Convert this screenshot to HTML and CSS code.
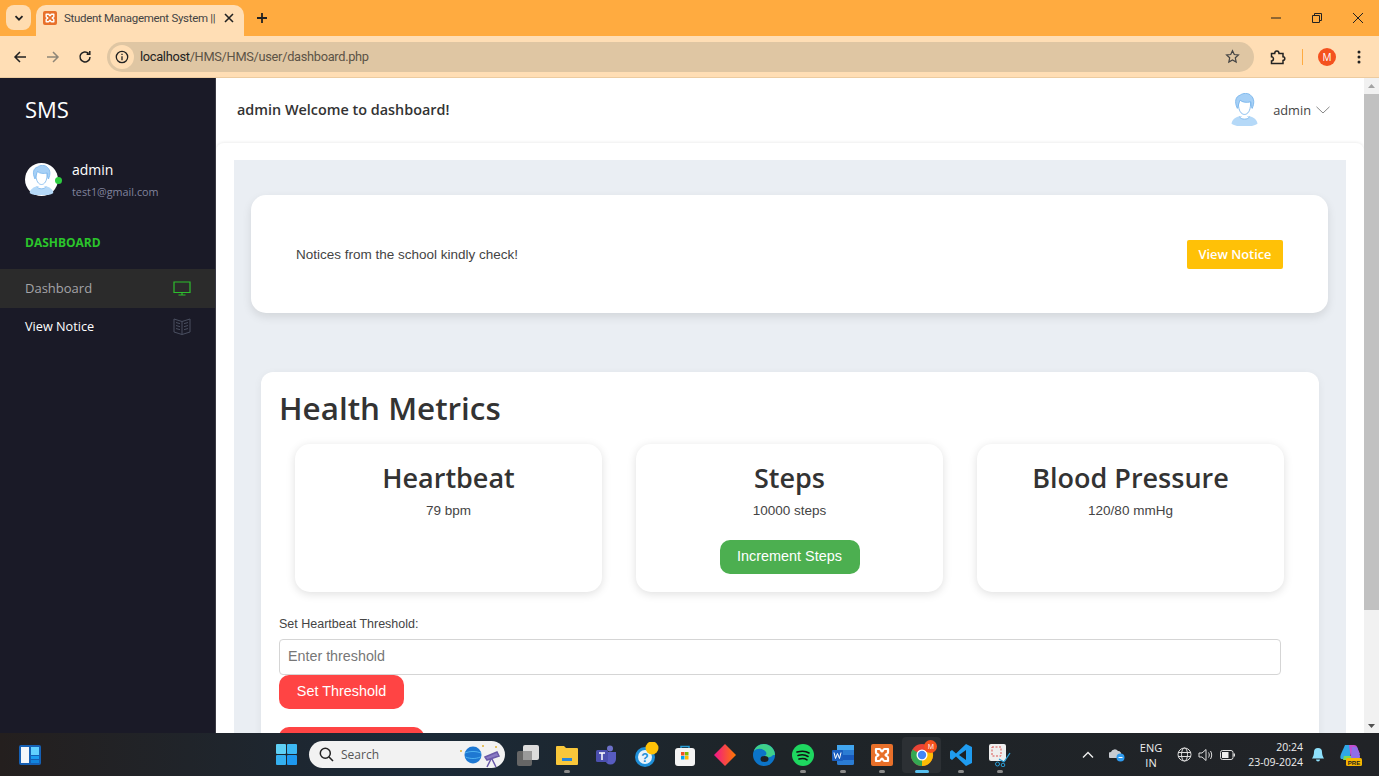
FILE: index.html
```html
<!DOCTYPE html>
<html lang="en">
<head>
<meta charset="utf-8">
<title>Student Management System</title>
<link rel="stylesheet" href="styles.css">
</head>
<body>
<div class="browser">
  <div class="tabstrip">
    <div class="tabsearch"><svg width="10" height="10" viewBox="0 0 10 10"><path d="M1.500 3.200 5 6.700l3.500-3.500" fill="none" stroke="#222" stroke-width="1.800"/></svg></div>
    <div class="tab">
      <svg class="favicon" width="14" height="14" viewBox="0 0 22 22"><rect width="22" height="22" rx="3" fill="#e8702a"/><path class="xampp" d="M5 5h3.500c1.500 0 1.500 2.500 2.500 2.500S12 5 13.500 5H17v3.500c0 1.500-2.500 1.500-2.500 2.500s2.500 1 2.500 2.500V17h-3.500c-1.500 0-1.500-2.500-2.500-2.500S9.500 17 8.500 17H5v-3.500c0-1.500 2.500-1.500 2.500-2.500S5 10 5 8.500z"/></svg>
      <span class="tabtitle">Student Management System ||</span>
      <svg width="10" height="10" viewBox="0 0 10 10"><path d="M1 1l8 8M9 1l-8 8" stroke="#222" stroke-width="1.600"/></svg>
    </div>
    <svg class="newtab" width="12" height="12" viewBox="0 0 12 12"><path d="M6 1v10M1 6h10" stroke="#222" stroke-width="1.800"/></svg>
    <div class="wincontrols">
      <svg width="12" height="12" viewBox="0 0 12 12"><path d="M1 6h10" stroke="#222"/></svg>
      <svg width="12" height="12" viewBox="0 0 12 12"><path d="M1.500 3.500h7v7h-7zM3.500 3.500v-2h7v7h-2" fill="none" stroke="#222"/></svg>
      <svg width="12" height="12" viewBox="0 0 12 12"><path d="M1 1l10 10M11 1L1 11" stroke="#222"/></svg>
    </div>
  </div>
  <div class="toolbar">
    <svg class="navicon" width="14" height="14" viewBox="0 0 14 14"><path d="M13 7H2M7 2 2 7l5 5" fill="none" stroke="#222" stroke-width="1.500"/></svg>
    <svg class="navicon" width="14" height="14" viewBox="0 0 14 14"><path d="M1 7h11M7 2l5 5-5 5" fill="none" stroke="#8f8677" stroke-width="1.500"/></svg>
    <svg class="navicon" width="14" height="14" viewBox="0 0 14 14"><path d="M12 7a5 5 0 1 1-1.500-3.600M11.800 1v3.200H8.600" fill="none" stroke="#222" stroke-width="1.500"/></svg>
    <div class="omnibox">
      <span class="infobadge"><svg width="14" height="14" viewBox="0 0 14 14"><circle cx="7" cy="7" r="5.700" fill="none" stroke="#222" stroke-width="1.300"/><path d="M7 6.200v4M7 3.800v1.300" stroke="#222" stroke-width="1.300"/></svg></span>
      <span class="url"><span class="urlhost">localhost</span>/HMS/HMS/user/dashboard.php</span>
      <svg class="star" width="15" height="15" viewBox="0 0 16 16"><path d="M8 1.800l1.900 4.100 4.400.5-3.300 3 .9 4.400L8 11.600l-3.900 2.200.9-4.400-3.300-3 4.400-.5z" fill="none" stroke="#444" stroke-width="1.300"/></svg>
    </div>
    <svg class="ext" width="16" height="16" viewBox="0 0 16 16"><path d="M1.500 4.500h3.200c0-3.500 4.300-3.500 4.300 0h4v3.200c2.400 0 2.400 3.800 0 3.800v3H1.500v-2.600c2.600 0 2.600-4.200 0-4.200z" fill="none" stroke="#222" stroke-width="1.500"/></svg>
    <span class="toolsep"></span>
    <span class="profile">M</span>
    <svg class="menu" width="4" height="14" viewBox="0 0 4 14"><circle cx="2" cy="2" r="1.500" fill="#222"/><circle cx="2" cy="7" r="1.500" fill="#222"/><circle cx="2" cy="12" r="1.500" fill="#222"/></svg>
  </div>

  <div class="viewport">
    <aside class="sidebar">
      <div class="brand">SMS</div>
      <div class="user">
        <span class="useravatar">
          <svg width="33" height="33" viewBox="0 0 33 33"><circle cx="16.500" cy="16.500" r="16.500" fill="#fff"/><use href="#person" x="4.500" y="2" width="24" height="30"/></svg>
          <span class="online"></span>
        </span>
        <div class="userinfo">
          <div class="username">admin</div>
          <div class="useremail">test1@gmail.com</div>
        </div>
      </div>
      <div class="navlabel">DASHBOARD</div>
      <nav class="nav">
        <a class="navitem active">Dashboard
          <svg width="18" height="15" viewBox="0 0 18 15"><path d="M1 1h16v10.500H1zM9 11.500v2.300M5.500 14h7" fill="none" stroke="#2dbe2d" stroke-width="1.200"/></svg>
        </a>
        <a class="navitem">View Notice
          <svg width="18" height="17" viewBox="0 0 18 17"><path d="M9 3.500 1 1v13l8 2.500 8-2.500V1zM9 3.500v13M3 4.500l4 1.200M3 7.500l4 1.200M3 10.500l4 1.200M15 4.500l-4 1.200M15 7.500l-4 1.200M15 10.500l-4 1.200" fill="none" stroke="#4a4f60" stroke-width="1"/></svg>
        </a>
      </nav>
    </aside>

    <main class="main">
      <header class="topbar">
        <div class="welcome">admin Welcome to dashboard!</div>
        <div class="topuser">
          <svg width="27" height="33" viewBox="0 0 24 30"><use href="#person"/></svg>
          <span class="topname">admin</span>
          <svg width="14" height="8" viewBox="0 0 14 8"><path d="M.5.800 7 7 13.500.800" fill="none" stroke="#888" stroke-width="1"/></svg>
        </div>
      </header>
      <div class="pagewrap">
        <div class="page">
          <section class="notice">
            <p class="noticetext">Notices from the school kindly check!</p>
            <a class="noticebtn">View Notice</a>
          </section>
          <section class="health">
            <h1 class="healthtitle">Health Metrics</h1>
            <div class="metrics">
              <div class="metric"><h2>Heartbeat</h2><p>79 bpm</p></div>
              <div class="metric"><h2>Steps</h2><p>10000 steps</p><button class="btn btngreen">Increment Steps</button></div>
              <div class="metric"><h2>Blood Pressure</h2><p>120/80 mmHg</p></div>
            </div>
            <label class="fieldlabel" for="hb">Set Heartbeat Threshold:</label>
            <input id="hb" class="field" type="text" placeholder="Enter threshold">
            <button class="btn btnred">Set Threshold</button>
            <button class="btn btnred btnnext" aria-hidden="true"></button>
          </section>
        </div>
      </div>
    </main>

    <div class="scrollbar">
      <svg width="9" height="6" viewBox="0 0 9 6"><path d="M4.500 1 8 5H1z" fill="#a3a3a3"/></svg>
      <div class="thumb"></div>
      <svg width="9" height="6" viewBox="0 0 9 6"><path d="M4.500 5 8 1H1z" fill="#505050"/></svg>
    </div>
  </div>

  <footer class="taskbar">
    <svg class="widgets" width="22" height="20" viewBox="0 0 22 20"><rect width="22" height="20" rx="2" fill="#1560b5"/><rect x="2" y="2" width="8" height="16" fill="#f2f6fa"/><rect x="12" y="2" width="8" height="8" fill="#62d0ff"/><rect x="12" y="11" width="8" height="3" fill="#1a9bf0"/><rect x="12" y="15" width="8" height="3" fill="#1285de"/></svg>
    <div class="centerbar">
      <svg class="tbicon" width="21" height="21" viewBox="0 0 21 21"><rect width="10" height="10" rx="1" fill="#5fd0f5"/><rect x="11" width="10" height="10" rx="1" fill="#3cb8f3"/><rect y="11" width="10" height="10" rx="1" fill="#35b0f0"/><rect x="11" y="11" width="10" height="10" rx="1" fill="#1e98ee"/></svg>
      <div class="search">
        <svg width="15" height="15" viewBox="0 0 15 15"><circle cx="6.300" cy="6.300" r="5" fill="none" stroke="#222" stroke-width="1.500"/><path d="M10 10l4 4" stroke="#222" stroke-width="1.600"/></svg>
        <span class="searchtext">Search</span>
        <svg class="searchart" width="46" height="26" viewBox="0 0 46 26"><circle cx="15" cy="13" r="8.500" fill="#1e78d2"/><path d="M7 11c5-2 11-2 16 0M7.500 15c5 2 10 2 15 0" stroke="#4fb2f0" fill="none"/><path d="M27 15l12-5 2 4-12 4zM33 17l-4 8M34 17l4 8" stroke="#6a5aa8" stroke-width="1.500" fill="#8a7ac4"/><circle cx="3" cy="9" r="1" fill="#e0b030"/><circle cx="25" cy="4" r="1" fill="#e0b030"/><circle cx="38" cy="5" r="1" fill="#e0b030"/></svg>
      </div>
      <div class="apps">
        <span class="app"><svg width="24" height="22" viewBox="0 0 24 22"><rect x="1" y="7" width="15" height="15" rx="2" fill="#666"/><rect x="7" y="1" width="16" height="15" rx="2" fill="#dcdcdc"/><rect x="7" y="7" width="9" height="9" fill="#9a9a9a"/></svg></span>
        <span class="app run"><svg width="22" height="20" viewBox="0 0 22 20"><path d="M0 2a1 1 0 0 1 1-1h7l2 2h11a1 1 0 0 1 1 1v15a1 1 0 0 1-1 1H1a1 1 0 0 1-1-1z" fill="#f9c73a"/><rect x="6" y="13" width="10" height="3" fill="#2a86d8"/></svg></span>
        <span class="app"><svg width="22" height="20" viewBox="0 0 22 20"><circle cx="15" cy="3.500" r="3" fill="#6c70c8"/><path d="M10 7h11v7a5 5 0 0 1-11 0z" fill="#585cc0"/><rect x="1" y="5" width="12" height="12" rx="1.500" fill="#4b4fae"/><path d="M4 8h6M7 8v7" stroke="#fff" stroke-width="1.500"/></svg></span>
        <span class="app"><svg width="26" height="26" viewBox="0 0 26 26"><circle cx="12" cy="15" r="10" fill="#1f8fd8"/><circle cx="12" cy="15" r="7" fill="#e8f3fb"/><text x="12" y="19.500" class="helpq">?</text><circle cx="19" cy="6" r="6.500" fill="#ffc107"/></svg></span>
        <span class="app"><svg width="22" height="22" viewBox="0 0 22 22"><path d="M7 5V2.500h8V5" fill="none" stroke="#2a9fd8" stroke-width="1.500"/><rect x="1" y="4" width="20" height="18" rx="3" fill="#f4f4f4"/><rect x="7" y="8" width="3.500" height="3.500" fill="#f25022"/><rect x="11" y="8" width="3.500" height="3.500" fill="#7fba00"/><rect x="7" y="12" width="3.500" height="3.500" fill="#00a4ef"/><rect x="11" y="12" width="3.500" height="3.500" fill="#ffb900"/></svg></span>
        <span class="app"><svg width="22" height="22" viewBox="0 0 22 22"><defs><linearGradient id="dia" x1="0" x2="1"><stop offset="0" stop-color="#f0148c"/><stop offset="1" stop-color="#ff7a00"/></linearGradient></defs><path d="M11 0l11 11-11 11L0 11z" fill="url(#dia)"/></svg></span>
        <span class="app"><svg width="22" height="22" viewBox="0 0 22 22"><circle cx="11" cy="11" r="11" fill="#0c74c8"/><path d="M22 11c0-6-5-11-11-11C6 0 2 3 1 7c3-3 9-3 12 1 1 2 0 4-2 4 2 2 7 2 9-1z" fill="#3fd08a"/><ellipse cx="11.500" cy="15" rx="4" ry="3" fill="#1d2024"/></svg></span>
        <span class="app run"><svg width="22" height="22" viewBox="0 0 22 22"><circle cx="11" cy="11" r="11" fill="#1ed760"/><path d="M5 8c4-1 9-1 12 1M6 11.500c3-1 7-1 10 1M7 15c3-.8 6-.6 8 .8" fill="none" stroke="#111" stroke-width="1.600" stroke-linecap="round"/></svg></span>
        <span class="app run"><svg width="22" height="22" viewBox="0 0 22 22"><rect x="5" y="1" width="17" height="20" rx="1.500" fill="#2b7cd3"/><rect x="5" y="1" width="17" height="5" fill="#41a5ee"/><rect x="5" y="11" width="17" height="5" fill="#185abd"/><rect x="0" y="6" width="11" height="11" rx="1" fill="#1b5ebe"/><path d="M2 8.500l1.500 6 2-5 2 5 1.500-6" fill="none" stroke="#fff" stroke-width="1"/></svg></span>
        <span class="app run"><svg width="22" height="22" viewBox="0 0 22 22"><rect width="22" height="22" rx="2" fill="#e8702a"/><path class="xampp" d="M5 5h3.500c1.500 0 1.500 2.500 2.500 2.500S12 5 13.500 5H17v3.500c0 1.500-2.500 1.500-2.500 2.500s2.500 1 2.500 2.500V17h-3.500c-1.500 0-1.500-2.500-2.500-2.500S9.500 17 8.500 17H5v-3.500c0-1.500 2.500-1.500 2.500-2.500S5 10 5 8.500z"/></svg></span>
        <span class="app current">
          <svg width="24" height="24" viewBox="0 0 24 24"><circle cx="12" cy="12" r="11" fill="#ea4335"/><path d="M12 12 2.470 6.500A11 11 0 0 0 12 23z" fill="#34a853"/><path d="M12 12l9.530-5.500A11 11 0 0 1 12 23z" fill="#fbbc05"/><circle cx="12" cy="12" r="5.500" fill="#fff"/><circle cx="12" cy="12" r="4.200" fill="#4285f4"/></svg>
          <span class="appbadge">M</span>
        </span>
        <span class="app run"><svg width="22" height="22" viewBox="0 0 22 22"><path d="M16 0l6 3v16l-6 3L6 12.500 2 16l-2-1.500V7.500L2 6l4 3.500z" fill="#1f9cf0"/><path d="M16 6 9 11l7 5z" fill="#1d2125"/></svg></span>
        <span class="app run"><svg width="24" height="24" viewBox="0 0 24 24"><rect x="1" y="1" width="17" height="17" rx="2" fill="#eee"/><rect x="4" y="4" width="9" height="9" fill="none" stroke="#d9534f" stroke-dasharray="2 1.500"/><path d="M11 16l5 3M22 10l-6 9" stroke="#2a9fd8" stroke-width="1.300"/><circle cx="9.500" cy="21" r="2" fill="none" stroke="#2a9fd8"/><circle cx="15" cy="22" r="1.800" fill="none" stroke="#2a9fd8"/></svg></span>
      </div>
    </div>
    <div class="tray">
      <svg width="12" height="8" viewBox="0 0 12 8"><path d="M1 6.500 6 1.500l5 5" fill="none" stroke="#eee" stroke-width="1.400"/></svg>
      <svg class="traycloud" width="16" height="14" viewBox="0 0 16 14"><path d="M2 10a3 3 0 0 1 0-6 4 4 0 0 1 7-1 3 3 0 0 1 3 4v3z" fill="#c8ccd2"/><circle cx="11.500" cy="9.500" r="4" fill="#2f9cf0"/><path d="M9.500 9.500h4" stroke="#fff"/></svg>
      <div class="lang">ENG<br>IN</div>
      <svg class="trayglobe" width="15" height="15" viewBox="0 0 15 15"><circle cx="7.500" cy="7.500" r="6.500" fill="none" stroke="#ddd"/><ellipse cx="7.500" cy="7.500" rx="3" ry="6.500" fill="none" stroke="#ddd"/><path d="M1 5.500h13M1 9.500h13" stroke="#ddd"/></svg>
      <svg class="trayspeaker" width="16" height="14" viewBox="0 0 16 14"><path d="M1 5h3l4-3.500v11L4 9H1z" fill="none" stroke="#ddd"/><path d="M10.500 4.500c1 1.500 1 3.500 0 5M12.500 3c1.600 2.500 1.600 5.500 0 8" fill="none" stroke="#ddd"/></svg>
      <svg class="traybattery" width="15" height="10" viewBox="0 0 15 10"><rect x=".5" y=".5" width="12.500" height="9" rx="2" fill="none" stroke="#ddd"/><rect x="2" y="2" width="6.500" height="6" fill="#eee"/><rect x="13.500" y="3.500" width="1.500" height="3" fill="#ddd"/></svg>
      <div class="clock">20:24<br>23-09-2024</div>
      <svg class="traybell" width="14" height="15" viewBox="0 0 14 15"><path d="M7 1a4 4 0 0 1 4 4c0 3 1 5 2 6.500H1C2 10 3 8 3 5a4 4 0 0 1 4-4z" fill="#8ee0fb"/><path d="M5 12.500a2 2 0 0 0 4 0z" fill="#8ee0fb"/></svg>
      <svg class="traycopilot" width="22" height="24" viewBox="0 0 22 24"><path d="M5 2h8l-4 14H2C0 16 0 14 1 11z" fill="#2fa8e8"/><path d="M9 2h5c2 0 3 1 3.500 3L20 11l-9 5z" fill="#c24fd0"/><path d="M4 13h8l-2 4H3z" fill="#7ed957"/><path d="M12 4h5l3 9c.5 2-1 3-3 3h-6z" fill="#8f6ee8"/><rect x="6" y="15" width="16" height="8" rx="1.500" fill="#f7b500"/><text x="14" y="21.500" class="pretext">PRE</text></svg>
    </div>
  </footer>
</div>

<svg class="defs" width="0" height="0" aria-hidden="true">
  <symbol id="person" viewBox="0 0 24 30">
    <path d="M0 28c1-4 4-6 8-7l8 0c4 1 7 3 8 7-3 2-7 2.500-12 2.500S3 30 0 28z" fill="#b5d9f8"/>
    <path d="M7.500 21.500c1 3 8 3 9 0" fill="#fff" stroke="#79b5ec" stroke-width=".8"/>
    <path d="M9.500 17v4.500c1 1.500 4 1.500 5 0V17z" fill="#fff"/>
    <path d="M6.500 10c0 6 2.500 9.500 5.500 9.500s5.500-3.500 5.500-9.500V6h-11z" fill="#fff" stroke="#79b5ec" stroke-width=".8"/>
    <path d="M5.500 14C2.500 8 4 3 8 2c2-2 8-2.500 10 .5 3 2.500 3 7 1 11.500-.8-.5-1-3-1.300-6C14 9 10 8.500 8 6.500c-1 2-1.500 5-2.500 7.500z" fill="#a6d0f6" stroke="#79b5ec" stroke-width=".8"/>
  </symbol>
</svg>
</body>
</html>
```

FILE: styles.css
```css
* { box-sizing: border-box; }
html, body { margin: 0; padding: 0; height: 100%; overflow: hidden; }
body { font-family: "Open Sans", "Noto Sans", sans-serif; color: #333; }
.defs { position: absolute; }
.xampp { fill: none; stroke: #fff; stroke-width: 2.200; stroke-linejoin: round; }

.browser { width: 1379px; height: 776px; display: flex; flex-direction: column; }

/* tab strip */
.tabstrip { height: 36px; background: #ffab40; display: flex; align-items: flex-end; padding-left: 6px; position: relative; }
.tabsearch { width: 25px; height: 25px; margin-bottom: 6px; border-radius: 8px; background: #ffdcb0; display: flex; align-items: center; justify-content: center; }
.tab { width: 208px; height: 31px; margin-left: 5px; padding: 0 10px 5px 7px; background: #ffdeb5; border-radius: 10px 10px 0 0; display: flex; align-items: center; gap: 7px; }
.favicon { flex: none; }
.tabtitle { flex: 1; font-family: Roboto, sans-serif; font-size: 11.500px; letter-spacing: -.3px; color: #444; white-space: nowrap; }
.newtab { margin: 0 0 12px 12px; }
.wincontrols { margin: 0 0 12px auto; width: 109px; padding-right: 15px; display: flex; justify-content: space-between; }

/* toolbar */
.toolbar { height: 42px; background: #ffdeb5; border-bottom: 1px solid #eccba0; display: flex; align-items: center; padding: 0 0 0 13px; }
.navicon { flex: none; margin-right: 18.500px; }
.omnibox { width: 1147px; height: 30px; margin-left: -3.500px; border-radius: 15px; background: #dfc6a3; display: flex; align-items: center; padding: 0 14px 0 3px; }
.infobadge { width: 24px; height: 24px; border-radius: 50%; background: #ffdeb5; display: flex; align-items: center; justify-content: center; }
.url { flex: 1; margin-left: 6px; font-family: Roboto, sans-serif; font-size: 12.800px; letter-spacing: -.3px; color: #5c5346; }
.urlhost { color: #222; }
.ext { margin-left: 16px; }
.toolsep { width: 1px; height: 16px; margin-left: 16px; background: #ffab40; }
.profile { width: 18px; height: 18px; margin-left: 15px; border-radius: 50%; background: #f4511e; color: #fff; font-size: 10px; display: flex; align-items: center; justify-content: center; }
.menu { margin-left: 21px; }

/* viewport */
.viewport { flex: 1; display: flex; min-height: 0; background: #fff; }
.sidebar { width: 216px; flex: none; background: #1a1a27; border-right: 1px solid #3a3a44; color: #fff; }
.brand { font-size: 22px; line-height: 30px; padding: 16px 0 0 25px; }
.user { display: flex; gap: 14px; padding: 39px 0 0 25px; }
.useravatar { position: relative; width: 33px; height: 33px; display: block; }
.online { position: absolute; right: -4px; bottom: 12px; width: 7px; height: 7px; border-radius: 50%; background: #2ecc40; }
.userinfo { margin-top: -3px; }
.username { font-size: 14px; line-height: 19px; }
.useremail { font-size: 10.800px; line-height: 16px; margin-top: 5px; color: #80839c; }
.navlabel { font-size: 12px; font-weight: 700; color: #2bc52b; line-height: 16px; padding: 35px 0 0 25px; }
.nav { margin-top: 18px; }
.navitem { height: 38.500px; padding: 0 24px 0 25px; display: flex; align-items: center; justify-content: space-between; font-size: 13px; color: #fff; }
.navitem + .navitem { height: 37px; font-size: 12.700px; }
.navitem.active { background: #2b2b2b; color: #a4a4a8; }

/* main column */
.main { flex: 1; min-width: 0; display: flex; flex-direction: column; overflow: hidden; background: #fff; }
.topbar { height: 63px; flex: none; padding: 0 34px 0 21px; display: flex; align-items: center; justify-content: space-between; background: #fff; }
.welcome { font-size: 14.400px; font-weight: 600; color: #333; }
.topuser { display: flex; align-items: center; }
.topname { font-size: 12.800px; margin: 0 5px 0 15px; color: #444; }
.pagewrap { flex: 1; min-height: 0; padding: 17px 18px 0; margin-top: 2px; border-radius: 8px 8px 0 0; box-shadow: 0 -1px 3px rgba(0,0,0,.07); overflow: hidden; }
.page { background: #eaeef3; height: 100%; padding: 35px 18px 0 17px; overflow: hidden; }

.notice { height: 118px; padding: 0 45px; background: #fff; border-radius: 15px; box-shadow: 0 4px 10px rgba(0,0,0,.1); display: flex; align-items: center; justify-content: space-between; }
.noticetext { margin: 0; font-family: "Liberation Sans", Arial, sans-serif; font-size: 13.500px; color: #444; }
.noticebtn { width: 96px; height: 29px; background: #ffc107; border-radius: 2px; color: #fff; font-size: 12.800px; font-weight: 600; display: flex; align-items: center; justify-content: center; }

.health { margin: 59px 9px 0 10px; height: 420px; padding: 15px 18px; background: #fff; border-radius: 12px; box-shadow: 0 2px 8px rgba(0,0,0,.06); }
.healthtitle { margin: 0; font-size: 31.400px; line-height: 42px; font-weight: 600; color: #333; }
.metrics { display: grid; grid-template-columns: repeat(3, 307px); column-gap: 34px; padding-left: 16px; margin-top: 15px; }
.metric { height: 148px; padding: 16px 0 0; background: #fff; border-radius: 15px; box-shadow: 0 2px 10px rgba(0,0,0,.13); text-align: center; }
.metric h2 { margin: 0; font-size: 27px; line-height: 36px; font-weight: 600; color: #333; }
.metric p { margin: 6px 0 0; font-family: "Liberation Sans", Arial, sans-serif; font-size: 13.500px; line-height: 18px; color: #444; }
.btn { display: block; border: 0; color: #fff; font-family: "Liberation Sans", Arial, sans-serif; font-size: 14.400px; height: 34px; border-radius: 10px; padding: 0 0 2px; }
.btngreen { width: 140px; margin: 20px auto 0; background: #4caf50; }
.fieldlabel { display: block; margin-top: 24px; font-family: "Liberation Sans", Arial, sans-serif; font-size: 12.500px; line-height: 16px; color: #444; }
.field { display: block; width: 1002px; height: 36px; margin-top: 7px; padding: 0 9px 2px 8px; border: 1px solid #d5d5d5; border-radius: 4px; background: #fff; font-family: "Liberation Sans", Arial, sans-serif; font-size: 14.300px; }
.field::placeholder { color: #777; }
.btnred { width: 125px; background: #ff4444; }
.btnnext { width: 145px; margin-top: 18px; }

.scrollbar { width: 15px; flex: none; background: #f1f1f1; display: flex; flex-direction: column; align-items: center; justify-content: space-between; padding: 5px 0 4px; }
.thumb { width: 15px; height: 516px; margin: 5px 0 auto; background: #c1c1c1; }

/* taskbar */
.taskbar { height: 43px; flex: none; background: linear-gradient(90deg, #241f1e 0, #1b2a38 30%, #1e2428 55%, #212327 100%); display: flex; align-items: center; color: #eee; }
.widgets { margin-left: 19px; flex: none; }
.centerbar { display: flex; align-items: center; margin-left: 235px; }
.tbicon { flex: none; }
.search { width: 196px; height: 27px; margin-left: 12px; border-radius: 14px; background: #f2f2f2; display: flex; align-items: center; padding: 0 1px 0 10px; color: #555; }
.searchtext { flex: 1; margin-left: 7px; font-size: 12px; }
.apps { display: flex; margin-left: 3px; }
.app { position: relative; width: 39.400px; height: 36px; display: flex; align-items: center; justify-content: center; border-radius: 4px; }
.app.run::after, .app.current::after { content: ""; position: absolute; bottom: 0; left: 50%; width: 6px; height: 3px; margin-left: -3px; border-radius: 2px; background: #8a8a8a; }
.app.current { background: #2c3034; }
.app.current::after { width: 14px; margin-left: -7px; background: #58c0f0; }
.appbadge { position: absolute; right: 4px; top: 3px; width: 13px; height: 13px; border-radius: 50%; background: #f4511e; color: #fff; font-size: 7px; display: flex; align-items: center; justify-content: center; }
.helpq { font: 700 12px "Liberation Sans", sans-serif; fill: #1f8fd8; text-anchor: middle; }
.pretext { font: 700 6px "Liberation Sans", sans-serif; fill: #222; text-anchor: middle; }

.tray { margin-left: auto; margin-right: 17px; display: flex; align-items: center; }
.traycloud { margin-left: 15px; }
.lang { width: 36px; margin-left: 8px; font-size: 11px; line-height: 15px; text-align: center; }
.trayglobe { margin-left: 8px; }
.trayspeaker { margin-left: 6px; }
.traybattery { margin-left: 6px; }
.clock { width: 68px; font-size: 10.500px; line-height: 15px; text-align: right; }
.traybell { margin-left: 8px; }
.traycopilot { margin-left: 15px; }
```
